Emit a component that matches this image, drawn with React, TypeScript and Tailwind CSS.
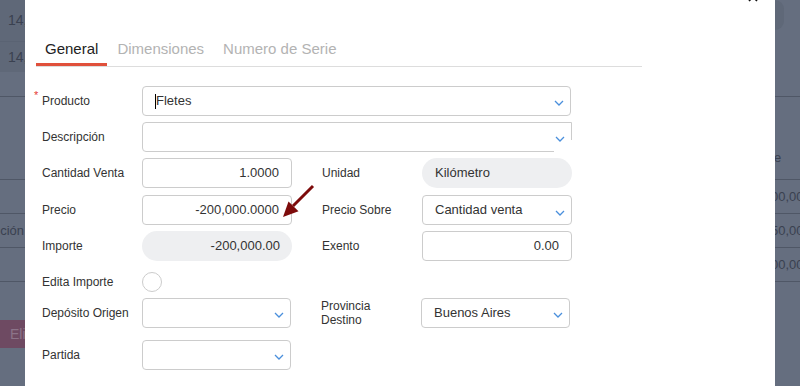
import React from "react";

const Chevron = ({ top = 13 }: { top?: number }) => (
  <svg
    className="absolute right-[6px]"
    style={{ top }}
    width="10"
    height="6"
    viewBox="0 0 10 6"
    fill="none"
  >
    <path d="M1 1 L5 5 L9 1" stroke="#4a8fdc" strokeWidth="1.3" />
  </svg>
);

const Select = ({ w, text, top }: { w: string; text?: string; top?: number }) => (
  <div
    className={`${w} h-full relative border border-[#cccccc] rounded-[4px] bg-white flex items-center pl-[12px] text-[13px] text-[#333]`}
  >
    {text}
    <Chevron top={top} />
  </div>
);

const Label = ({ children, w = "w-[100px]" }: { children: React.ReactNode; w?: string }) => (
  <div className={`${w} shrink-0 text-[12px] text-[#333] leading-[14px]`}>{children}</div>
);

function LeftStrip() {
  return (
    <div className="w-[25px] h-full shrink-0 overflow-hidden flex flex-col text-[14px] text-[#3a4150] whitespace-nowrap">
      <div className="h-[72px] bg-[#5f6878] flex flex-col">
        <div className="h-[42px] flex items-center pl-[8px] border-b border-[#5a6373]">14,</div>
        <div className="h-[30px] flex items-center pl-[8px]">14,</div>
      </div>
      <div className="h-[25px] border-b border-[#4f5766]" />
      <div className="h-[83px] border-b border-[#4f5766]" />
      <div className="h-[34px] border-b border-[#4f5766]" />
      <div className="h-[34px] border-b border-[#4f5766] flex items-center justify-end pr-px text-[13px]">
        ción
      </div>
      <div className="h-[34px] border-b border-[#4f5766]" />
      <div className="h-[38px]" />
      <div className="h-[28px] bg-[#6e4a62] flex items-center pl-[10px] text-[14px] text-[#8c7489]">Eli</div>
    </div>
  );
}

function RightStrip() {
  return (
    <div className="w-[25px] h-full shrink-0 overflow-hidden flex flex-col text-[13px] text-[#3a4150] whitespace-nowrap">
      <div className="h-[97px] border-b border-[#4f5766]">
        <div className="w-[9px] h-[30px] rounded-r-full bg-[#5f6878]" />
      </div>
      <div className="h-[83px] border-b border-[#4f5766] flex items-end pb-[12px]">
        <span className="ml-[-1px]">e</span>
      </div>
      <div className="h-[34px] border-b border-[#4f5766] flex items-center">
        <span className="ml-[-4px]">00,00</span>
      </div>
      <div className="h-[34px] border-b border-[#4f5766] flex items-center">
        <span className="ml-[-4px]">50,00</span>
      </div>
      <div className="h-[34px] border-b border-[#4f5766] flex items-center">
        <span className="ml-[-4px]">00,00</span>
      </div>
    </div>
  );
}

function Modal() {
  return (
    <div className="w-[750px] h-full shrink-0 bg-white relative pl-[11px] pt-[36px]">
      <svg className="absolute left-[723px] top-[-8px]" width="10" height="10" viewBox="0 0 10 10">
        <path d="M1 1 L9 9 M9 1 L1 9" stroke="#111" strokeWidth="1.6" />
      </svg>

      <div className="w-[606px] flex gap-px border-b border-[#dddddd] text-[15px]">
        <div className="h-[30px] px-[9px] flex items-center border-b-[3px] border-[#e0503b] text-[#222]">General</div>
        <div className="h-[30px] px-[9px] flex items-center border-b-[3px] border-transparent text-[#b3b3b3]">Dimensiones</div>
        <div className="h-[30px] px-[9px] flex items-center border-b-[3px] border-transparent text-[#b3b3b3]">Numero de Serie</div>
      </div>

      <div className="pl-[6px] flex flex-col">
        <div className="mt-[19px] h-[30px] flex items-center relative">
          <span className="absolute left-[-8px] top-[1px] text-[11px] text-[#e53935]">*</span>
          <Label>Producto</Label>
          <div className="w-[429px] h-full relative border border-[#cccccc] rounded-[4px] bg-white flex items-center pl-[12px] text-[13px] text-[#333]">
            <span className="w-px h-[15px] bg-black" />
            Fletes
            <Chevron top={13} />
          </div>
        </div>

        <div className="mt-[6px] h-[30px] flex items-center">
          <Label>Descripción</Label>
          <div className="w-[430px] h-full relative border border-[#cccccc] rounded-l-[4px] bg-white">
            <div className="absolute right-[-1px] bottom-[-1px] w-[18px] h-[12px] bg-white" />
            <Chevron top={13} />
          </div>
        </div>

        <div className="mt-[6px] h-[30px] flex items-center">
          <Label>Cantidad Venta</Label>
          <div className="w-[150px] h-full border border-[#cccccc] rounded-[4px] flex items-center justify-end pr-[12px] text-[13px] text-[#333]">
            1.0000
          </div>
          <div className="w-[30px]" />
          <Label>Unidad</Label>
          <div className="w-[150px] h-full rounded-full bg-[#eeeff1] flex items-center pl-[13px] text-[13px] text-[#333]">
            Kilómetro
          </div>
        </div>

        <div className="mt-[7px] h-[30px] flex items-center">
          <Label>Precio</Label>
          <div className="w-[150px] h-full border border-[#cccccc] rounded-[4px] flex items-center justify-end pr-[12px] text-[13px] text-[#333]">
            -200,000.0000
          </div>
          <div className="w-[30px]" />
          <Label>Precio Sobre</Label>
          <Select w="w-[150px]" text="Cantidad venta" top={14} />
        </div>

        <div className="mt-[6px] h-[30px] flex items-center">
          <Label>Importe</Label>
          <div className="w-[150px] h-full rounded-full bg-[#eeeff1] flex items-center justify-end pr-[12px] text-[13px] text-[#333]">
            -200,000.00
          </div>
          <div className="w-[30px]" />
          <Label>Exento</Label>
          <div className="w-[150px] h-full border border-[#cccccc] rounded-[4px] flex items-center justify-end pr-[12px] text-[13px] text-[#333]">
            0.00
          </div>
        </div>

        <div className="mt-[11px] h-[20px] flex items-center">
          <Label>Edita Importe</Label>
          <div className="w-[20px] h-[20px] rounded-full border border-[#cccccc] bg-white" />
        </div>

        <div className="mt-[6px] h-[30px] flex items-center">
          <Label>Depósito Origen</Label>
          <Select w="w-[149px]" />
          <div className="w-[30px]" />
          <Label>
            Provincia
            <br />
            Destino
          </Label>
          <Select w="w-[149px]" text="Buenos Aires" />
        </div>

        <div className="mt-[12px] h-[30px] flex items-center">
          <Label>Partida</Label>
          <Select w="w-[149px]" />
        </div>
      </div>

      <svg className="absolute left-0 top-0 pointer-events-none" width="750" height="386" viewBox="0 0 750 386">
        <path d="M288 186 L268 206" stroke="#7d0b0b" strokeWidth="3" />
        <polygon points="258,217 263.5,201.5 273.5,211.3" fill="#7d0b0b" />
      </svg>
    </div>
  );
}

export default function App() {
  return (
    <div className="w-[800px] h-[386px] overflow-hidden flex bg-[#656e7f] font-['Liberation_Sans',Arial,sans-serif]">
      <LeftStrip />
      <Modal />
      <RightStrip />
    </div>
  );
}
